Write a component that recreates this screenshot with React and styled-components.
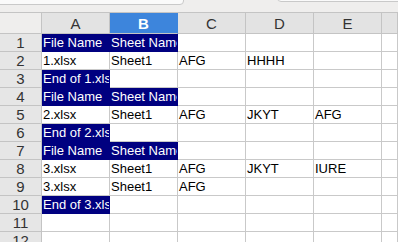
import * as React from "react";
import styled, { createGlobalStyle } from "styled-components";

const GlobalStyle = createGlobalStyle`
  html, body {
    margin: 0;
    padding: 0;
    background: #ffffff;
    overflow: hidden;
  }
  body {
    font-family: "Liberation Sans", Arial, sans-serif;
  }
`;

const Page = styled.div`
  width: 398px;
  height: 242px;
  overflow: hidden;
  background: #ffffff;
`;

const Toolbar = styled.div`
  height: 12px;
  background: #efeeed;
  display: flex;
  align-items: flex-end;
  overflow: hidden;
  .name-box {
    width: 190px;
    height: 20px;
    margin: 0 0 7px -8px;
    background: #fafafa;
    border: 1px solid #c9c9c9;
    border-radius: 4px;
    flex-shrink: 0;
  }
  .formula-box {
    flex: 1;
    height: 20px;
    margin: 0 -8px 10px 93px;
    background: #fafafa;
    border: 1px solid #c9c9c9;
    border-radius: 4px;
  }
`;

const Sheet = styled.div`
  display: grid;
  grid-template-columns: 42px repeat(5, 68px) 1fr;
  grid-template-rows: 21px;
  grid-auto-rows: 18px;
  border-top: 1px solid #c4c4c4;
`;

const ColHeader = styled.div`
  display: flex;
  align-items: center;
  justify-content: center;
  font-size: 15px;
  color: ${(p) => (p.$active ? "#ffffff" : "#333333")};
  font-weight: ${(p) => (p.$active ? 700 : 400)};
  background: ${(p) => (p.$active ? "#3d85dc" : p.$corner ? "#efeeed" : "#e3e3e3")};
  border-right: 1px solid ${(p) => (p.$active ? "#3d85dc" : "#c4c4c4")};
  border-bottom: 1px solid #c4c4c4;
  box-sizing: border-box;
`;

const RowHeader = styled.div`
  display: flex;
  align-items: center;
  justify-content: center;
  font-size: 15px;
  color: #333333;
  background: #e6e6e6;
  border-right: 1px solid #c4c4c4;
  border-bottom: 1px solid #c4c4c4;
  box-sizing: border-box;
`;

const Cell = styled.div`
  display: flex;
  align-items: center;
  padding-left: 1px;
  font-size: 13px;
  white-space: nowrap;
  overflow: hidden;
  color: ${(p) => (p.$fill ? "#ffffff" : "#000000")};
  background: ${(p) => (p.$fill ? "#000080" : "#ffffff")};
  border-right: 1px solid ${(p) => (p.$fill ? "#000080" : "#c9c9c9")};
  border-bottom: 1px solid ${(p) => (p.$fill ? "#000080" : "#c9c9c9")};
  box-sizing: border-box;
`;

const columns = ["A", "B", "C", "D", "E", ""];

const header = { cells: ["File Name", "Sheet Name"], fill: 2 };

const rows = [
  header,
  { cells: ["1.xlsx", "Sheet1", "AFG", "HHHH"] },
  { cells: ["End of 1.xlsx"], fill: 1 },
  header,
  { cells: ["2.xlsx", "Sheet1", "AFG", "JKYT", "AFG"] },
  { cells: ["End of 2.xlsx"], fill: 1 },
  header,
  { cells: ["3.xlsx", "Sheet1", "AFG", "JKYT", "IURE"] },
  { cells: ["3.xlsx", "Sheet1", "AFG"] },
  { cells: ["End of 3.xlsx"], fill: 1 },
  { cells: [] },
  { cells: [] },
];

export default function App() {
  return (
    <Page>
      <GlobalStyle />
      <Toolbar>
        <div className="name-box" />
        <div className="formula-box" />
      </Toolbar>
      <Sheet>
        <ColHeader $corner />
        {columns.map((c, i) => (
          <ColHeader key={i} $active={c === "B"}>
            {c}
          </ColHeader>
        ))}
        {rows.map((r, ri) => (
          <React.Fragment key={ri}>
            <RowHeader>{ri + 1}</RowHeader>
            {columns.map((_, ci) => (
              <Cell key={ci} $fill={ci < (r.fill || 0)}>
                {r.cells[ci] || ""}
              </Cell>
            ))}
          </React.Fragment>
        ))}
      </Sheet>
    </Page>
  );
}
